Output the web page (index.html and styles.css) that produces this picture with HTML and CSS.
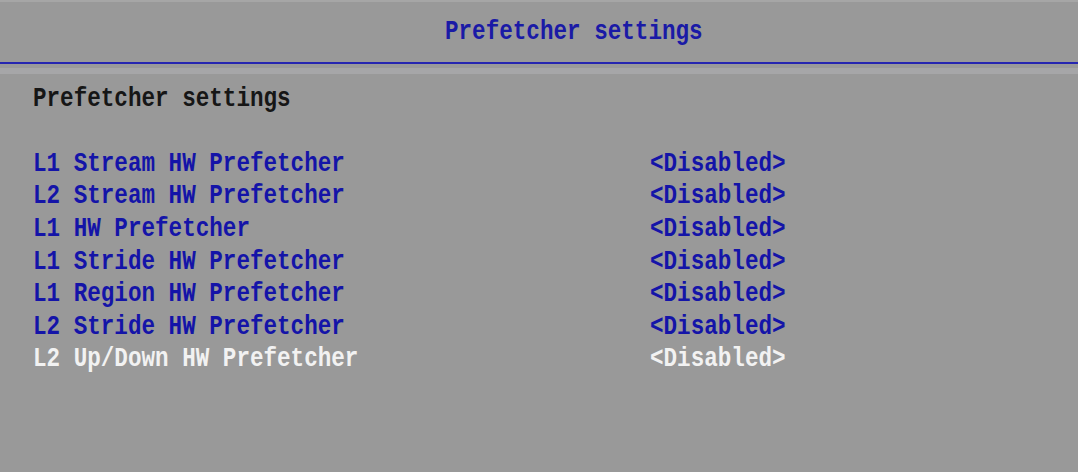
FILE: index.html
```html
<!DOCTYPE html>
<html>
<head>
<meta charset="utf-8">
<link rel="stylesheet" href="styles.css">
</head>
<body>
<div class="screen">
  <header class="topbar">
    <div class="title">Prefetcher settings</div>
  </header>
  <div class="rule"></div>
  <main class="panel">
    <div class="heading">Prefetcher settings</div>
    <div class="list">
      <div class="row"><span class="label">L1 Stream HW Prefetcher</span><span class="value">&lt;Disabled&gt;</span></div>
      <div class="row"><span class="label">L2 Stream HW Prefetcher</span><span class="value">&lt;Disabled&gt;</span></div>
      <div class="row"><span class="label">L1 HW Prefetcher</span><span class="value">&lt;Disabled&gt;</span></div>
      <div class="row"><span class="label">L1 Stride HW Prefetcher</span><span class="value">&lt;Disabled&gt;</span></div>
      <div class="row"><span class="label">L1 Region HW Prefetcher</span><span class="value">&lt;Disabled&gt;</span></div>
      <div class="row"><span class="label">L2 Stride HW Prefetcher</span><span class="value">&lt;Disabled&gt;</span></div>
      <div class="row selected"><span class="label">L2 Up/Down HW Prefetcher</span><span class="value">&lt;Disabled&gt;</span></div>
    </div>
  </main>
</div>
</body>
</html>
```
FILE: styles.css
```css
html, body {
  margin: 0;
  padding: 0;
  background: #999999;
}
.screen {
  width: 1078px;
  height: 472px;
  background: #999999;
  font-family: "Liberation Mono", "DejaVu Sans Mono", monospace;
  font-size: 22.6px;
  font-weight: bold;
  overflow: hidden;
}
.topbar {
  height: 62px;
  border-top: 2px solid #a6a6a6;
  box-sizing: border-box;
  display: flex;
  align-items: center;
  padding-left: 445px;
}
.title {
  color: #1a1aa6;
  transform: scaleY(1.2);
  line-height: 1;
  margin-top: 1px;
}
.rule {
  height: 2px;
  background: #2626b0;
  border-bottom: 4px solid #9a9a9a;
  box-shadow: 0 6px 0 0 #a6a6a8;
}
.panel {
  padding: 15px 0 0 33px;
}
.heading {
  color: #161616;
  height: 32.6px;
  line-height: 32.6px;
  transform: scaleY(1.2);
  margin-bottom: 32px;
}
.list {
  display: flex;
  flex-direction: column;
}
.row {
  display: flex;
  height: 32.65px;
  line-height: 32.65px;
  color: #1414a8;
}
.row span {
  display: inline-block;
  transform: scaleY(1.2);
}
.label {
  width: 617px;
}
.selected {
  color: #f2f2f2;
}
```
